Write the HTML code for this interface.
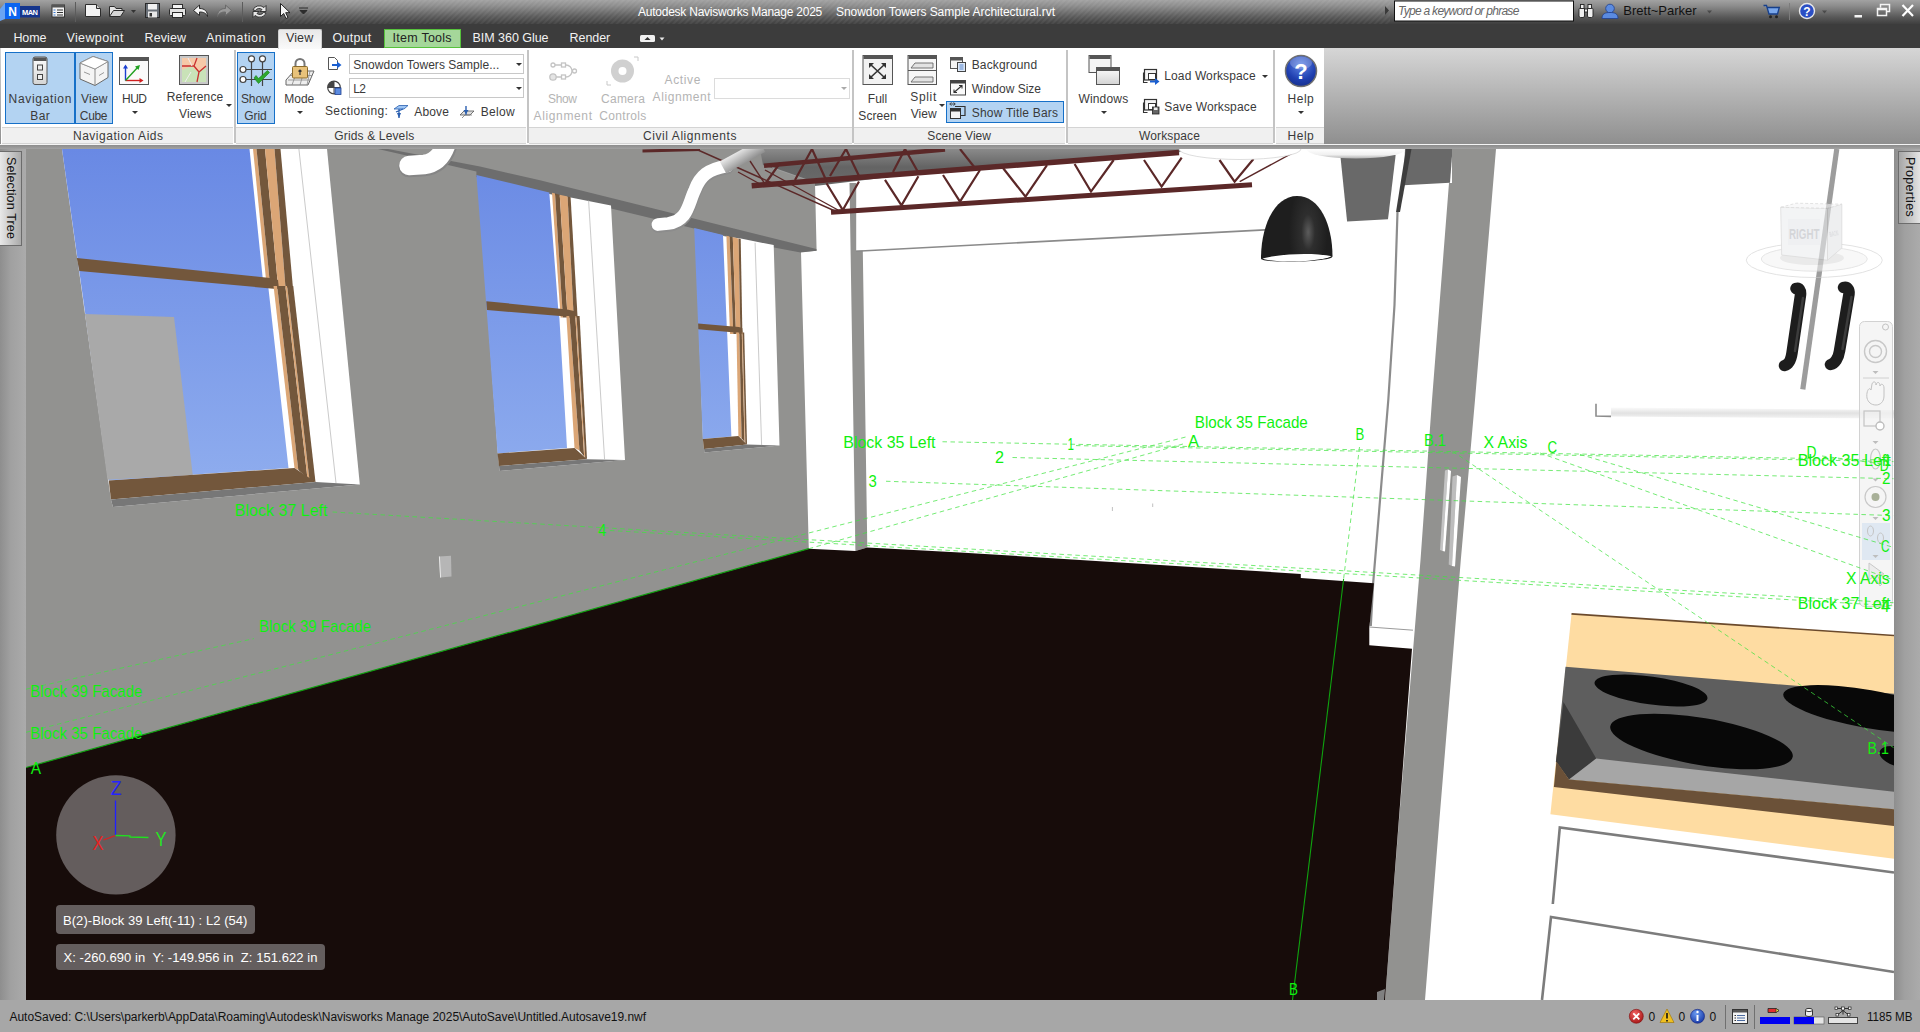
<!DOCTYPE html>
<html lang="en">
<head>
<meta charset="utf-8">
<title>Autodesk Navisworks Manage 2025 - Snowdon Towers Sample Architectural.rvt</title>
<style>
*{box-sizing:border-box;margin:0;padding:0}
html,body{width:1920px;height:1032px;overflow:hidden;background:#a7a7a7}
body{position:relative;font-family:"Liberation Sans",sans-serif;font-size:12px;color:#333}
.abs{position:absolute}
#titlebar{left:0;top:0;width:1920px;height:24px;background:linear-gradient(#a2a2a2 0%,#8c8c8c 25%,#5a5a5a 70%,#3f3f3f 100%)}
#tabbar{left:0;top:24px;width:1920px;height:24px;background:#3c3c3c}
#ribbon{left:0;top:48px;width:1920px;height:97px;background:linear-gradient(#d6d6d6,#8e8e8e)}
#ribbonwhite{left:1px;top:0;width:1322.800px;height:97px;background:#fff}
#gap{left:0;top:145px;width:1920px;height:4px;background:linear-gradient(#8c8c8c,#a2a2a2)}
#leftbar{left:0;top:149px;width:26px;height:851px;background:linear-gradient(90deg,#8e8e8e,#a0a0a0 40%,#ababab 100%)}
#rightbar{left:1894px;top:149px;width:26px;height:851px;background:linear-gradient(90deg,#8e8e8e,#a0a0a0 40%,#ababab 100%)}
#status{left:0;top:1000px;width:1920px;height:32px;background:#a7a7a7}
#scene{left:26px;top:149px;width:1868px;height:851px;background:#fff;overflow:hidden}
.t{position:absolute;white-space:nowrap;line-height:14px;height:14px}
.tab{position:absolute;top:31px;color:#f2f2f2;font-size:12.5px;white-space:nowrap;line-height:14px}
.rl{position:absolute;white-space:nowrap;font-size:12px;line-height:14px;color:#3a3a3a;text-align:center}
.dis{color:#b4b4b4}
.sel{position:absolute;background:#b3d3f2;border:1px solid #1670c8}
.ptitle{position:absolute;top:78.5px;height:17.5px;background:#f0f0f0;border-top:1px solid #d4d4d4;border-bottom:1px solid #d4d4d4}
.psep{position:absolute;top:2px;width:2px;height:93px;background:#c4c4c4}
.combo{position:absolute;border:1px solid #c8c8c8;background:#fff;height:20px}
.arr{position:absolute;width:0;height:0;border-left:3px solid transparent;border-right:3px solid transparent;border-top:3px solid #444}
.vtab{position:absolute;background:linear-gradient(90deg,#e8e8e8,#aaaaaa);border:1px solid #6c6c6c;color:#111;font-size:12.5px}
.hud{position:absolute;background:#645e5e;border-radius:4px;color:#fff;font-size:13px;line-height:16px;white-space:nowrap}
</style>
</head>
<body>
<div id="titlebar" class="abs"></div>
<div id="tabbar" class="abs"></div>
<div id="ribbon" class="abs"><div id="ribbonwhite" class="abs"></div></div>
<div id="gap" class="abs"></div><div class="abs" style="left:0;top:143.800px;width:1920px;height:1.700px;background:#f4f4f4"></div>
<div id="leftbar" class="abs"></div>
<div id="rightbar" class="abs"></div>
<div id="scene" class="abs">
<svg width="1868" height="851" viewBox="26 149 1868 851" style="position:absolute;left:0;top:0" font-family="'Liberation Sans',sans-serif">
<defs>
<linearGradient id="sky" gradientUnits="userSpaceOnUse" x1="0" y1="149" x2="0" y2="480"><stop offset="0" stop-color="#6989e4"/><stop offset="1" stop-color="#8eacee"/></linearGradient>
<linearGradient id="slab" gradientUnits="userSpaceOnUse" x1="0" y1="149" x2="0" y2="185"><stop offset="0" stop-color="#8a8a8a"/><stop offset="0.5" stop-color="#646464"/><stop offset="1" stop-color="#6a6a6a"/></linearGradient>
<radialGradient id="lamp" cx="0.66" cy="0.55" r="0.6" gradientTransform="translate(0.66 0.55) scale(0.45 1.3) translate(-0.66 -0.55)"><stop offset="0" stop-color="#5c5c5c"/><stop offset="0.35" stop-color="#2e2e2e"/><stop offset="1" stop-color="#1e1e1e"/></radialGradient>
<linearGradient id="pipeg" gradientUnits="userSpaceOnUse" x1="738" y1="150" x2="748" y2="166"><stop offset="0" stop-color="#ececec"/><stop offset="0.5" stop-color="#b4b4b4"/><stop offset="1" stop-color="#7c7c7c"/></linearGradient>
<linearGradient id="dish" x1="0" y1="0" x2="0" y2="1"><stop offset="0.5" stop-color="#ffffff"/><stop offset="0.8" stop-color="#f0f0f0"/><stop offset="1" stop-color="#b0b0b0"/></linearGradient><linearGradient id="rail" x1="0" y1="0" x2="0" y2="1"><stop offset="0" stop-color="#fafafa"/><stop offset="0.5" stop-color="#e2e2e2"/><stop offset="1" stop-color="#f4f4f4"/></linearGradient>
</defs>
<rect x="26" y="149" width="1868" height="851" fill="#fff"/>
<!-- ceiling slab + truss -->
<g id="ceiling">
<polygon points="745,149 1185,149 1179,152.6 940,171 815,186 763,168 745,158" fill="url(#slab)"/>
<polygon points="772,167 816,182.5 800,182 776,175" fill="#9d9d9d"/>
</g>
<!-- left wall with beam -->
<g id="wall">
<polygon points="26,149 760,149 763,165 815,183 816.6,250.7 801,251.9 808.8,548.7 26,767.5" fill="#929290"/>
<polygon points="388,149 480,166.500 540,180.300 816.400,249 816.600,250.700 800.600,252.600 774,247.500 694,228.500 611,208.500 476.400,177 476.400,171.400 378,149" fill="#6d6d6d"/>
</g>
<g id="win1">
<polygon points="62,149 327,149 359.8,484.4 113,507 110.9,499.5" fill="#fff"/>
<polygon points="62,149 249.5,149 263,281 268.3,287 288.5,468 108.8,480.6" fill="url(#sky)"/>
<polygon points="85,314 174,317 192.7,474.8 107.5,479.8" fill="#a9a9a9"/>
<polygon points="253,149 256.5,149 270.31,287.5 266.81,287.5" fill="#dba676"/>
<polygon points="256.5,149 265,149 278.19,287.5 270.31,287.5" fill="#73573c"/>
<polygon points="265,149 274.5,149 285.489,287.5 278.19,287.5" fill="#dba676"/>
<polygon points="274.5,149 280.5,149 292.947,287.5 285.489,287.5" fill="#73573c"/>
<polygon points="76.8,257.9 270.1,278 278,280 279,289.2 79.4,271" fill="#73573c"/>
<polygon points="273.54,286 277.14,286 298.3,470 294.47,468" fill="#dba676"/>
<polygon points="277.14,286 285.34,286 307.42,478 298.3,470" fill="#73573c"/>
<polygon points="285.34,286 287.14,286 309.393,479.5 307.42,478" fill="#dba676"/>
<polygon points="287.14,286 293.246,286 315.492,482 309.393,479.5" fill="#73573c"/>
<polygon points="108.8,480.6 294.47,468 315.492,482 110.9,499.5" fill="#73573c"/>
<polygon points="110.9,499.5 315.492,482 359.8,484.4 113,507" fill="#777"/>
<line x1="298.9" y1="149" x2="336" y2="483" stroke="#bdbdbd" stroke-width="0.8"/>
</g>
<g id="win2">
<polygon points="478,178 551.5,194.500 572,197.800 611,205.500 625,460 499.6,471 498,455" fill="#fff"/>
<polygon points="476.400,175 549.3,192.400 558.3,310 559.4,318 567,447.9 497.6,453.4" fill="url(#sky)"/>
<polygon points="552,192.821 555,193.54 562.9,317.5 560.6,317.5" fill="#dba676"/>
<polygon points="555,193.54 559.7,194.667 567.6,317.5 562.9,317.5" fill="#73573c"/>
<polygon points="559.7,194.667 567.6,196.561 573.7,317.5 567.6,317.5" fill="#dba676"/>
<polygon points="567.6,196.561 570.6,197.28 577.6,317.5 573.7,317.5" fill="#73573c"/>
<polygon points="486.3,301.2 567.2,309.4 574,311 575,319.5 566.4,316.5 487,310" fill="#73573c"/>
<polygon points="566.4,316 569.5,316 579.5,450.5 574.5,447.9" fill="#dba676"/>
<polygon points="569.5,316 575.3,316 584.2,456.5 579.5,450.5" fill="#73573c"/>
<polygon points="575.3,316 576.5,316 585.2,457.5 584.2,456.5" fill="#dba676"/>
<polygon points="576.5,316 579.6,316 587,459.2 585.2,457.5" fill="#73573c"/>
<polygon points="497.6,453.4 574.5,447.9 587,459.2 499,466" fill="#73573c"/>
<polygon points="499,466 587,459.2 625,460 499.6,471" fill="#777"/>
<line x1="588.6" y1="200.5" x2="604.6" y2="459.6" stroke="#bdbdbd" stroke-width="0.8"/>
</g>
<g id="win3">
<polygon points="695.5,230 725.4,236.500 740.800,238.600 773.7,245.1 779.5,445.6 704.4,452.6 703,440" fill="#fff"/>
<polygon points="694.2,228.1 723,235.1 726.7,325 727.2,334 731.4,436.5 702.8,439" fill="url(#sky)"/>
<polygon points="726.4,235.625 729.6,236.402 733.3,334 730,334" fill="#dba676"/>
<polygon points="729.6,236.402 732.8,237.18 736,334 733.3,334" fill="#73573c"/>
<polygon points="732.8,237.18 738.6,238.589 740.4,334 736,334" fill="#dba676"/>
<polygon points="738.6,238.589 740.7,239.099 742.4,334 740.4,334" fill="#73573c"/>
<polygon points="698.1,323.5 738.8,327 742.3,328 742.8,334.5 737.7,332.8 698.3,329.3" fill="#73573c"/>
<polygon points="736.5,332.5 739.3,332.5 741.6,438.2 738.4,436" fill="#dba676"/>
<polygon points="739.3,332.5 741.8,332.5 744.6,442 741.6,438.2" fill="#73573c"/>
<polygon points="741.8,332.5 742.6,332.5 745.4,443 744.6,442" fill="#dba676"/>
<polygon points="742.6,332.5 744.2,332.5 747,444.4 745.4,443" fill="#73573c"/>
<polygon points="702.8,439 738.4,436 747,444.4 704,449" fill="#73573c"/>
<polygon points="704,449 747,444.4 779.5,445.6 704.4,452.6" fill="#777"/>
<line x1="755.1" y1="242.8" x2="761.6" y2="445.1" stroke="#bdbdbd" stroke-width="0.8"/>
</g>
<polygon points="439,556.5 451,555.7 451.5,576.5 440.2,577.6" fill="#b6b6b6"/>
<line x1="439.4" y1="556.5" x2="440.6" y2="577.6" stroke="#e8e8e8" stroke-width="1"/>
<!--WINDOWS-->
<g id="columns">
<polygon points="849.5,183 856.2,183 856.2,250.7 862.8,250.4 867.3,547.6 855.4,551" fill="#929290"/>
<line x1="856" y1="251.2" x2="1265" y2="229.9" stroke="#8a8a8a" stroke-width="1.6"/>
</g>
<g id="truss" stroke="#5b2828" fill="none">
<line x1="642.5" y1="151" x2="700" y2="149.4" stroke-width="3"/>
<line x1="764" y1="165.8" x2="945" y2="149.5" stroke-width="4.5"/>
<line x1="751.7" y1="185.8" x2="1179" y2="152.6" stroke-width="5.5"/>
<line x1="831" y1="212.3" x2="1252" y2="184.8" stroke-width="5"/>
<g stroke-width="1.4">
<line x1="698" y1="150" x2="835" y2="211"/>
<line x1="738" y1="172" x2="760" y2="184"/>
<line x1="750" y1="161" x2="765" y2="184"/>
<line x1="765" y1="170" x2="838" y2="210"/>
</g>
<g stroke-width="2.2">
<path d="M826.5,183.3 L842.8,210 L859,181.5"/>
<path d="M885,179.8 L901.5,205.3 L918.4,176.3"/>
<path d="M943,175 L960,201.7 L980,170"/>
<path d="M1002.8,167.7 L1025.5,196.7 L1047,165.2"/>
<path d="M1074.6,164 L1091,191.6 L1113.7,160"/>
<path d="M1144,160 L1161.6,186.6 L1181.7,157.6"/>
<path d="M1219.5,160 L1234.6,181.6 L1253.5,159"/>
<path d="M780,163 L765,184 M812,149 L795,180 M812,149 L826,180 M846,149 L830,176 M846,149 L860,178 M905,149 L893,172 M905,149 L918,172 M960,149 L975,168"/>
</g>
<line x1="1239.7" y1="181.6" x2="1300" y2="149" stroke-width="1.4"/>
</g>
<g id="lights">
<ellipse cx="1240" cy="149" rx="61" ry="10.5" fill="#fff" stroke="#c8c8c8" stroke-width="0.6"/>
</g>
<g id="pipes" fill="none" stroke-linecap="round">
<path d="M409,166.800 L424,165.800 Q441,164 447,145" stroke="#858585" stroke-width="21"/>
<path d="M409,165.500 L424,164.500 Q440,162.500 446,144" stroke="#fff" stroke-width="19.500"/>
<path d="M658,225.800 L668,224.800 C688,222.300 688,205.300 694.800,191.300 C700,177.300 708,170.300 727,167.300" stroke="#8c8c8c" stroke-width="14"/>
<path d="M658,224.500 L668,223.500 C688,221 688,204 694.800,190 C700,176 708,169 727,166" stroke="#fff" stroke-width="12.800"/>
<path d="M762,146 L723,167.500" stroke="url(#pipeg)" stroke-width="13.500" stroke-linecap="butt"/>
</g>
<g id="lamp">
<path d="M1261,258.5 C1261,225 1275,196 1297,196 C1320,196 1332.5,225 1332.5,256.5 C1332.5,262 1261,264 1261,258.5Z" fill="url(#lamp)"/>
<path d="M1262.5,258.5 C1280,253.5 1315,252.5 1331.5,256.3 C1320,262 1275,263.5 1262.5,258.5Z" fill="#fff"/>
</g>
<g id="hang">
<polygon points="1340.200,154 1396,152 1388,219.200 1347.100,221.400" fill="#696969"/>
<ellipse cx="1356" cy="149" rx="49.500" ry="9.500" fill="url(#dish)"/>
<polygon points="1405,149 1452.500,149 1450,182.700 1403.500,185.200" fill="#696969"/>
<polygon points="1406,149 1411.500,149 1400,212 1396,212" fill="#3e3e3e"/>
<polyline points="1397.5,212 1394.500,305 1388.300,400 1373.2,582.7 1370.8,626" fill="none" stroke="#8c8c8c" stroke-width="2.2"/>
</g>
<g id="jamb">
<polygon points="1452,149 1496,149 1475,400 1460.8,560 1439.4,820 1425,1000 1385,1000 1399,820 1420.5,560 1432,400 1449,183 1452,183" fill="#929290"/>
<polygon points="1445,470.5 1448,469.5 1442.5,551 1440,550" fill="#c4c4c4"/>
<polygon points="1448,469.5 1451,471 1445,551.5 1442.5,551" fill="#fff"/>
<polygon points="1452.5,476.5 1457,475 1452,566 1448.7,564.5" fill="#bdbdbd"/>
<polygon points="1457,475 1461,477 1455,566.5 1452,566" fill="#fff"/>
</g>
<!--COLUMNS-->
<g id="floor">
<polygon points="26,767.5 808.8,548.7 855.4,551 867.3,547.6 960,552.4 1200,567.6 1300.8,573.9 1300.8,578 1373.9,583.2 1369.3,628 1369.3,645.2 1412,648.7 1385,1000 26,1000" fill="#170c0a"/>
<line x1="1369.3" y1="627" x2="1413" y2="630.2" stroke="#9a9a9a" stroke-width="1"/>
<polygon points="1377,992 1385,989 1384,1000 1377,1000" fill="#808080"/>
</g>
<!--FLOOR-->
<g id="rightside">
<line x1="1836.8" y1="149" x2="1802.8" y2="389.4" stroke="#9c9c9c" stroke-width="5.2"/>
<!-- rail -->
<polygon points="1611,407.6 1894,410 1894,418.6 1611,416.4" fill="url(#rail)"/>
<path d="M1596,403.8 L1596,416 L1611,416.4" fill="none" stroke="#8c8c8c" stroke-width="1.6"/>
<!-- handles -->
<g fill="none" stroke="#1d1d1d" stroke-width="11.5" stroke-linecap="round" stroke-linejoin="round">
<path d="M1796,288.500 C1799,287.500 1801,290 1800.500,295 L1792,353 C1791,360 1788.500,364.500 1784.500,365.500"/>
<path d="M1843.500,287.500 C1847,286.500 1849.500,289 1849,294 L1839.500,351 C1838.500,358 1835,363.500 1830.500,364.500"/>
</g>
<g fill="none" stroke="#3c3c3c" stroke-width="2.5" stroke-linecap="round"><path d="M1803,298 L1795,351"/><path d="M1851.500,297 L1842.500,349"/></g>
<!-- counter -->
<polygon points="1571.5,613.9 1894,635.5 1894,858.8 1550.4,814.2" fill="#fedca2"/>
<line x1="1571.5" y1="613.9" x2="1894" y2="635.5" stroke="#6b4a2c" stroke-width="1.6"/>
<polygon points="1565.5,666.8 1894,693.8 1894,809 1569,779.4 1556,761.3" fill="#5e5e5e"/>
<polygon points="1563.5,702 1596.2,758.6 1569,779.4 1556,761.3" fill="#3b3b3b"/>
<polygon points="1596.2,758.6 1894,791.8 1894,809.2 1569,779.4" fill="#a6a6a6"/>
<polygon points="1556.4,761.3 1569,779.4 1894,809.2 1894,826 1553.9,787" fill="#6b5138"/>
<g fill="#080808">
<ellipse cx="1651" cy="690.5" rx="57" ry="14" transform="rotate(8 1651 690.5)"/>
<ellipse cx="1701.5" cy="741.5" rx="92.5" ry="23.5" transform="rotate(9.5 1701.5 741.5)"/>
<ellipse cx="1868" cy="709" rx="86" ry="19" transform="rotate(10 1868 709)"/>
<ellipse cx="1900" cy="757" rx="21" ry="10" transform="rotate(15 1900 757)"/>
</g>
<!-- cabinet -->
<g fill="none" stroke="#7c7c7c" stroke-width="2.6">
<polyline points="1552.8,904 1559.8,827.5 1894,872.5"/>
<polyline points="1542,1000 1551,917 1894,972"/>
</g>
</g>
<g id="viewcube" opacity="0.6">
<ellipse cx="1814.300" cy="260.200" rx="68" ry="17.300" fill="none" stroke="#cfcfcf" stroke-width="1"/>
<ellipse cx="1814.300" cy="259" rx="53" ry="12.200" fill="#f4f4f4" stroke="#d4d4d4" stroke-width="1"/>
<ellipse cx="1812" cy="258" rx="32" ry="7" fill="#dcdcdc"/>
<polygon points="1780.700,207.300 1827.500,208.300 1827.500,260.200 1781.700,255" fill="#ecedef" stroke="#c4c4c4" stroke-width="0.800"/>
<polygon points="1827.500,208.300 1841.800,204.200 1841.800,248 1827.500,260.200" fill="#e3e4e6" stroke="#c4c4c4" stroke-width="0.800"/>
<polygon points="1780.700,207.300 1796,203.200 1841.800,204.200 1827.500,208.300" fill="#f4f4f5" stroke="#c4c4c4" stroke-width="0.800" stroke-dasharray="3 2"/>
<rect x="1788" y="219" width="32" height="26" fill="#e4e6ea"/>
<text x="1789" y="239" font-size="14" font-weight="bold" fill="#b8babf" textLength="30.500" lengthAdjust="spacingAndGlyphs">RIGHT</text>
<text x="1830" y="237" font-size="8" font-weight="bold" fill="#c4c6ca" textLength="9" lengthAdjust="spacingAndGlyphs" transform="rotate(-12 1830 237)">BACK</text>
</g>
<g id="navbar">
<rect x="1859.5" y="321.5" width="33" height="285" rx="5" fill="#f2f2f2" fill-opacity="0.75" stroke="#d2d2d2" stroke-width="1"/>
<circle cx="1885.5" cy="327" r="3" fill="none" stroke="#c2c2c2" stroke-width="1"/>
<circle cx="1875.5" cy="351.5" r="11" fill="none" stroke="#c8c8c8" stroke-width="1.4"/>
<circle cx="1875.5" cy="351.5" r="6" fill="none" stroke="#c8c8c8" stroke-width="1.4"/>
<line x1="1863" y1="378" x2="1889" y2="378" stroke="#d0d0d0"/>
<rect x="1864" y="411" width="16" height="15" fill="none" stroke="#c4c4c4" stroke-width="1.2"/>
<circle cx="1880" cy="426" r="4" fill="#fff" stroke="#bdbdbd" stroke-width="1.4"/>
<ellipse cx="1875.5" cy="459" rx="5" ry="10" fill="none" stroke="#c8c8c8" stroke-width="1.2"/>
<circle cx="1875.5" cy="497" r="10.5" fill="none" stroke="#c8c8c8" stroke-width="1.2"/>
<circle cx="1875.5" cy="497" r="4" fill="#a8b098"/>
<rect x="1862" y="523" width="28" height="37" fill="#dfe8f2"/>
<ellipse cx="1870.5" cy="531" rx="3" ry="5" fill="none" stroke="#c4c4c4"/>
<ellipse cx="1880.5" cy="538" rx="3" ry="5" fill="none" stroke="#c4c4c4"/>
<path d="M1869,563 L1869,580 L1874,576 L1880,586 L1882,584 L1877,575 L1884,574Z" fill="#ececec" stroke="#c8c8c8"/>
<g fill="#bdbdbd"><path d="M1872.5,371 l6,0 l-3,3z"/><path d="M1872.5,441 l6,0 l-3,3z"/><path d="M1872.5,478.5 l6,0 l-3,3z"/><path d="M1872.5,517 l6,0 l-3,3z"/><path d="M1872.5,555 l6,0 l-3,3z"/></g>
<path d="M1867,398 C1866,392 1869,386 1871,390 L1872,384 C1873,381 1876,381 1876,385 C1877,381 1880,382 1880,386 C1881,383 1884,384 1884,388 L1884,396 C1884,402 1880,405 1876,405 C1871,405 1868,402 1867,398Z" fill="#f6f6f6" stroke="#c2c2c2" stroke-width="1"/>
</g>
<!--RIGHT-->
<g id="grid">
<g stroke="#3fe43f" stroke-width="0.9" stroke-dasharray="4.5 3.5" fill="none" opacity="0.8">
<line x1="942.5" y1="441.75" x2="1893.5" y2="460.1"/>
<line x1="1076" y1="445.6" x2="1893.5" y2="461.6"/>
<line x1="1012.5" y1="457.5" x2="1893.5" y2="478.7"/>
<line x1="886" y1="481.25" x2="1893.5" y2="515.6"/>
<line x1="332.6" y1="512" x2="1893.5" y2="602.7"/>
<line x1="610" y1="530.5" x2="1893.5" y2="605.8"/>
<line x1="26" y1="689.2" x2="254" y2="638.6"/>
<line x1="26" y1="732.300" x2="1188.75" y2="436.25"/>
<line x1="808.8" y1="548.7" x2="1183" y2="444"/>
<line x1="1359.5" y1="447" x2="1343.6" y2="579"/>
<line x1="1452.5" y1="451.25" x2="1893.5" y2="747.6"/>
<line x1="1540" y1="453" x2="1893.5" y2="580"/>
<line x1="1580" y1="454.4" x2="1893.5" y2="547.4"/>
<line x1="1822" y1="456" x2="1893.5" y2="465.5"/>
</g>
<line x1="26" y1="767.5" x2="808.8" y2="548.7" stroke="#0f9f0f" stroke-width="1.200"/>
<line x1="1343.6" y1="579" x2="1292.5" y2="1000" stroke="#0fa30f" stroke-width="1.1"/>
<g fill="#10f010" font-size="16.6">
<text x="234.8" y="516" textLength="92.7" lengthAdjust="spacingAndGlyphs">Block 37 Left</text>
<text x="259" y="632.3" textLength="112" lengthAdjust="spacingAndGlyphs">Block 39 Facade</text>
<text x="30.2" y="697" textLength="112.2" lengthAdjust="spacingAndGlyphs">Block 39 Facade</text>
<text x="30.2" y="738.6" textLength="112.2" lengthAdjust="spacingAndGlyphs">Block 35 Facade</text>
<text x="30.7" y="773.9" textLength="10.3" lengthAdjust="spacingAndGlyphs">A</text>
<text x="598" y="536" textLength="8.3" lengthAdjust="spacingAndGlyphs">4</text>
<text x="843.3" y="447.9" textLength="92.2" lengthAdjust="spacingAndGlyphs">Block 35 Left</text>
<text x="868.5" y="487" textLength="8.3" lengthAdjust="spacingAndGlyphs">3</text>
<text x="995" y="463" textLength="9" lengthAdjust="spacingAndGlyphs">2</text>
<text x="1067.5" y="450.4" textLength="6.5" lengthAdjust="spacingAndGlyphs">1</text>
<text x="1194.8" y="428.2" textLength="113" lengthAdjust="spacingAndGlyphs">Block 35 Facade</text>
<text x="1188" y="446.6" textLength="11" lengthAdjust="spacingAndGlyphs">A</text>
<text x="1355.6" y="440.3" textLength="8.8" lengthAdjust="spacingAndGlyphs">B</text>
<text x="1424" y="446" textLength="22" lengthAdjust="spacingAndGlyphs">B.1</text>
<text x="1483.5" y="447.9" textLength="44" lengthAdjust="spacingAndGlyphs">X Axis</text>
<text x="1547.6" y="452.6" textLength="9.6" lengthAdjust="spacingAndGlyphs">C</text>
<text x="1806.6" y="458" textLength="10" lengthAdjust="spacingAndGlyphs">D</text>
<text x="1797.8" y="466" textLength="93" lengthAdjust="spacingAndGlyphs">Block 35 Left</text>
<text x="1884.5" y="466" textLength="6" lengthAdjust="spacingAndGlyphs">1</text>
<text x="1879.7" y="471" textLength="9" lengthAdjust="spacingAndGlyphs">D</text>
<text x="1882" y="484.4" textLength="8.5" lengthAdjust="spacingAndGlyphs">2</text>
<text x="1882" y="521.4" textLength="8.5" lengthAdjust="spacingAndGlyphs">3</text>
<text x="1881" y="552.4" textLength="8.5" lengthAdjust="spacingAndGlyphs">C</text>
<text x="1846" y="584.4" textLength="43.7" lengthAdjust="spacingAndGlyphs">X Axis</text>
<text x="1797.8" y="609" textLength="92.7" lengthAdjust="spacingAndGlyphs">Block 37 Left</text>
<text x="1881" y="611.6" textLength="8.3" lengthAdjust="spacingAndGlyphs">4</text>
<text x="1867.6" y="753.7" textLength="21.4" lengthAdjust="spacingAndGlyphs">B.1</text>
<text x="1289" y="995" textLength="9" lengthAdjust="spacingAndGlyphs">B</text>
</g>
</g>
<path d="M1112.4,507 v4 M1152.7,503.500 v3.500" stroke="#b0b0b0" stroke-width="0.800"/>
<!--GRID-->
<g id="hudaxes">
<circle cx="115.900" cy="834.900" r="59.700" fill="#645d5d"/>
<g fill="none" stroke-width="1.300">
<line x1="115.500" y1="800.500" x2="115.500" y2="835.500" stroke="#2020ff"/>
<line x1="115.500" y1="835.500" x2="103.500" y2="840" stroke="#e02020"/>
<path d="M115.500,835.500 L130,835.800 L130,837 L148.500,837.500" stroke="#20e020"/>
</g>
<g font-size="20.300">
<text x="110.700" y="794.800" fill="#2424ff" textLength="10.800" lengthAdjust="spacingAndGlyphs">Z</text>
<text x="92.500" y="850" fill="#e42424" textLength="11" lengthAdjust="spacingAndGlyphs">X</text>
<text x="155.500" y="845.700" fill="#24e424" textLength="11" lengthAdjust="spacingAndGlyphs">Y</text>
</g>
</g>

<!--HUD-->
</svg>

</div>
<div id="status" class="abs"></div>

<!-- title bar content -->
<div class="abs" style="left:0;top:0;width:1920px;height:24px;overflow:hidden">
<svg width="1920" height="24" style="position:absolute;left:0;top:0">
<defs><pattern id="hatch" width="4" height="4" patternUnits="userSpaceOnUse" patternTransform="rotate(45)"><rect width="2" height="4" fill="#fff" fill-opacity="0.05"/></pattern></defs>
<rect x="280" y="0" width="1110" height="24" fill="url(#hatch)"/>
<!-- N logo -->
<polygon points="0,9 5,3 5,19 0,21" fill="#6aa4f2"/>
<rect x="5" y="3" width="15" height="16" fill="#0b64f0"/>
<rect x="20" y="6" width="20" height="11.5" fill="#15358c"/>
<text x="12.5" y="16" font-size="12" font-weight="bold" fill="#fff" text-anchor="middle" font-family="'Liberation Sans',sans-serif">N</text>
<text x="30" y="15" font-size="7.5" font-weight="bold" fill="#fff" text-anchor="middle" font-family="'Liberation Sans',sans-serif" textLength="16">MAN</text>
<!-- list icon -->
<rect x="52" y="5" width="12.5" height="12" fill="#f4f4f4" stroke="#333" stroke-width="1"/><rect x="52" y="5" width="12.5" height="2.5" fill="#555"/><path d="M57,10h6M57,12.5h6M57,15h6" stroke="#333" stroke-width="1"/><path d="M53.5,10h2M53.5,12.5h2M53.5,15h2" stroke="#3a7ad0" stroke-width="1"/>
<line x1="75.500" y1="2" x2="75.500" y2="22" stroke="#5c5c5c"/>
<!-- new -->
<path d="M85.500,4.500 h11 l4,4 v8 h-15z" fill="#f2f2f2" stroke="#2c2c2c"/><path d="M96.500,4.500 v4 h4" fill="#cfcfcf" stroke="#2c2c2c"/>
<!-- open -->
<path d="M109.500,16.500 v-10 h5 l1.500,2 h6 v2" fill="#e6e6e6" stroke="#2c2c2c"/><path d="M109.500,16.500 l4,-6 h11 l-4,6z" fill="#d6d6d6" stroke="#2c2c2c"/>
<path d="M131,10 h5 l-2.500,3z" fill="#333"/>
<!-- save -->
<rect x="145.500" y="3.500" width="14" height="14" fill="#6a7078" stroke="#2a2a2a"/><rect x="148" y="4" width="9" height="5.500" fill="#f2f2f2"/><rect x="148" y="11.500" width="9" height="6" fill="#e8e8e8"/><rect x="149.500" y="13" width="2.500" height="3.500" fill="#333"/>
<!-- print -->
<rect x="172.500" y="4.500" width="10" height="5" fill="#f4f4f4" stroke="#2c2c2c"/><rect x="169.500" y="8.500" width="16" height="7" rx="1" fill="#e2e2e2" stroke="#2c2c2c"/><rect x="172.500" y="12.500" width="10" height="5" fill="#f4f4f4" stroke="#2c2c2c"/>
<!-- undo / redo -->
<path d="M193.500,10.500 l6,-5.500 v3.500 c5,0 8,2.500 8,8 c-1.500,-3.500 -4,-4.500 -8,-4.500 v3.500z" fill="#f4f4f4" stroke="#2a2a2a" stroke-width="1"/>
<path d="M231.500,10.500 l-6,-5.500 v3.500 c-5,0 -8,2.500 -8,8 c1.500,-3.500 4,-4.500 8,-4.500 v3.500z" fill="#9a9a9a" stroke="#6a6a6a" stroke-width="1"/>
<line x1="242.500" y1="2" x2="242.500" y2="22" stroke="#5c5c5c"/>
<!-- refresh -->
<path d="M253,10 a6.500,5.500 0 0 1 11,-2.500 l2,-2 v6 h-6 l2,-2 a4,3.500 0 0 0 -6.500,1z M266,13 a6.500,5.500 0 0 1 -11,2.500 l-2,2 v-6 h6 l-2,2 a4,3.500 0 0 0 6.500,-1z" fill="#e8e8e8" stroke="#2a2a2a" stroke-width="0.9"/>
<!-- cursor -->
<path d="M280.500,3.500 v13 l3.200,-3 l2.300,5 l2,-1 l-2.300,-4.800 h4.300z" fill="#f4f4f4" stroke="#222" stroke-width="1"/>
<path d="M299,8 h9 M300,10.500 h7 l-3.500,3.500z" stroke="#2c2c2c" fill="#2c2c2c" stroke-width="1"/>
<!-- search area -->
<path d="M1385,6 l4,4.500 l-4,4.500z" fill="#3a3a3a"/>
<rect x="1394.500" y="1" width="179" height="20" fill="#fff" stroke="#111" stroke-width="1"/>
<!-- binoculars -->
<g fill="#f0f0f0" stroke="#222" stroke-width="0.9"><rect x="1579" y="8" width="5.500" height="9.500" rx="1.500"/><rect x="1587.500" y="8" width="5.500" height="9.500" rx="1.500"/><rect x="1580.500" y="4.500" width="3.500" height="4"/><rect x="1588" y="4.500" width="3.500" height="4"/><rect x="1584.500" y="9" width="3" height="3"/></g>
<!-- user -->
<circle cx="1610" cy="8.500" r="4.300" fill="#5b8be0" stroke="#1e3f90" stroke-width="0.8"/><path d="M1602,18.500 c0,-5 3.500,-6 8,-6 c4.500,0 8,1 8,6z" fill="#5b8be0" stroke="#1e3f90" stroke-width="0.8"/>
<path d="M1707,10.500 h5 l-2.500,3z" fill="#4a4a4a"/>
<!-- cart -->
<path d="M1763.500,5.500 h3 l2.500,8.500 h8.500 l1.800,-6.500 h-11.800" fill="#7aa7ea" stroke="#173f8a" stroke-width="1.300"/><circle cx="1770.500" cy="16.800" r="1.500" fill="#222"/><circle cx="1776.500" cy="16.800" r="1.500" fill="#222"/>
<line x1="1789.500" y1="3" x2="1789.500" y2="20" stroke="#7c7c7c"/>
<circle cx="1807" cy="11" r="7.500" fill="#2b4fc4" stroke="#e8e8e8" stroke-width="1.400"/>
<text x="1807" y="15.500" font-size="12" font-weight="bold" fill="#fff" text-anchor="middle" font-family="'Liberation Sans',sans-serif">?</text>
<path d="M1822,10.500 h5 l-2.500,3z" fill="#4a4a4a"/>
<rect x="1854.500" y="15" width="7.500" height="2.500" fill="#f4f4f4"/>
<path d="M1880.500,7.500 v-3 h9 v7 h-3 M1877.500,8.500 h9 v7 h-9z M1877.500,9.500h9" fill="none" stroke="#f4f4f4" stroke-width="1.500"/>
<path d="M1902.500,5 l10.500,11 M1913,5 l-10.500,11" stroke="#fff" stroke-width="2.200"/>
</svg>
<div class="t" style="left:638px;top:5px;color:#fff;font-size:12px"><span class="fit" style="letter-spacing:-0.24px;margin-right:0.24px">Autodesk Navisworks Manage 2025</span></div><div class="t" style="left:836px;top:5px;color:#fff;font-size:12px"><span class="fit" style="letter-spacing:-0.057px;margin-right:0.057px">Snowdon Towers Sample Architectural.rvt</span></div>
<div class="t" style="left:1398px;top:4px;color:#666;font-size:12px;font-style:italic"><span class="fit" style="letter-spacing:-0.718px;margin-right:0.718px">Type a keyword or phrase</span></div>
<div class="t" style="left:1623.300px;top:4px;color:#111;font-size:13px"><span class="fit" style="letter-spacing:0.005px;margin-right:-0.005px">Brett~Parker</span></div>
</div>
<!-- tabs -->
<div class="abs" style="left:277.500px;top:28.500px;width:44px;height:20px;background:linear-gradient(#e8e8e8,#fafafa);border:1px solid #d0d0d0;border-bottom:none;border-radius:2px 2px 0 0"></div>
<div class="abs" style="left:383.500px;top:28.500px;width:77.500px;height:19.500px;background:#a5d79a;border:1px solid #56c23c"></div>
<div class="tab" style="left:13.500px"><span class="fit" style="letter-spacing:-0.161px;margin-right:0.161px">Home</span></div>
<div class="tab" style="left:66.500px"><span class="fit" style="letter-spacing:0.368px;margin-right:-0.368px">Viewpoint</span></div>
<div class="tab" style="left:144.500px"><span class="fit" style="letter-spacing:0.117px;margin-right:-0.117px">Review</span></div>
<div class="tab" style="left:206px"><span class="fit" style="letter-spacing:0.49px;margin-right:-0.49px">Animation</span></div>
<div class="tab" style="left:286px;color:#333"><span class="fit" style="letter-spacing:0.106px;margin-right:-0.106px">View</span></div>
<div class="tab" style="left:332.500px"><span class="fit" style="letter-spacing:0.245px;margin-right:-0.245px">Output</span></div>
<div class="tab" style="left:392.500px;color:#222"><span class="fit" style="letter-spacing:0.265px;margin-right:-0.265px">Item Tools</span></div>
<div class="tab" style="left:472.500px"><span class="fit" style="letter-spacing:-0.036px;margin-right:0.036px">BIM 360 Glue</span></div>
<div class="tab" style="left:569.500px"><span class="fit" style="letter-spacing:-0.05px;margin-right:0.05px">Render</span></div>
<svg class="abs" style="left:636px;top:30px" width="34" height="16"><rect x="4" y="5" width="15" height="7" rx="1.500" fill="#f0f0f0"/><path d="M8.500,10 l3,-3 l3,3z" fill="#333"/><path d="M23.500,7.500 h5 l-2.500,3z" fill="#e8e8e8"/></svg>
<div id="rib" class="abs" style="left:0;top:0;width:1920px;height:150px;pointer-events:none">
<div class="sel" style="left:5px;top:52px;width:70px;height:72px"></div>
<div class="sel" style="left:73.500px;top:52px;width:39.500px;height:72px;border-left-width:2px"></div>
<div class="sel" style="left:237px;top:52px;width:37.600px;height:72px"></div>
<div class="sel" style="left:946px;top:101px;width:117.500px;height:21.500px"></div>
<div class="ptitle" style="left:2px;top:126.500px;width:231px"></div>
<div class="ptitle" style="left:236px;top:126.500px;width:290px"></div>
<div class="ptitle" style="left:529px;top:126.500px;width:322.5px"></div>
<div class="ptitle" style="left:854px;top:126.500px;width:211px"></div>
<div class="ptitle" style="left:1068px;top:126.500px;width:204.5px"></div>
<div class="ptitle" style="left:1275.5px;top:126.500px;width:48px"></div>
<div class="psep" style="left:233.5px;top:50px"></div>
<div class="psep" style="left:526.5px;top:50px"></div>
<div class="psep" style="left:851.5px;top:50px"></div>
<div class="psep" style="left:1065.5px;top:50px"></div>
<div class="psep" style="left:1273px;top:50px"></div>

<div class="rl " style="left:40px;top:91.5px;width:200px;margin-left:-100px"><span class="fit" style="letter-spacing:0.68px;margin-right:-0.68px">Navigation</span></div>
<div class="rl " style="left:40px;top:108.5px;width:200px;margin-left:-100px"><span class="fit" style="letter-spacing:0.438px;margin-right:-0.438px">Bar</span></div>
<div class="rl " style="left:94.3px;top:91.5px;width:200px;margin-left:-100px"><span class="fit" style="letter-spacing:0.226px;margin-right:-0.226px">View</span></div>
<div class="rl " style="left:93.7px;top:108.5px;width:200px;margin-left:-100px"><span class="fit" style="letter-spacing:-0.347px;margin-right:0.347px">Cube</span></div>
<div class="rl " style="left:134.5px;top:91.5px;width:200px;margin-left:-100px"><span class="fit" style="letter-spacing:-0.533px;margin-right:0.533px">HUD</span></div>
<div class="rl " style="left:195px;top:89.5px;width:200px;margin-left:-100px"><span class="fit" style="letter-spacing:0.136px;margin-right:-0.136px">Reference</span></div>
<div class="rl " style="left:195.3px;top:106.5px;width:200px;margin-left:-100px"><span class="fit" style="letter-spacing:0.181px;margin-right:-0.181px">Views</span></div>
<div class="rl " style="left:255.8px;top:91.5px;width:200px;margin-left:-100px"><span class="fit" style="letter-spacing:-0.083px;margin-right:0.083px">Show</span></div>
<div class="rl " style="left:255.5px;top:108.5px;width:200px;margin-left:-100px"><span class="fit" style="letter-spacing:-0.093px;margin-right:0.093px">Grid</span></div>
<div class="rl " style="left:299.3px;top:91.5px;width:200px;margin-left:-100px"><span class="fit" style="letter-spacing:-0.008px;margin-right:0.008px">Mode</span></div>
<div class="rl " style="left:325px;top:104px;text-align:left"><span class="fit" style="letter-spacing:0.357px;margin-right:-0.357px">Sectioning:</span></div>
<div class="rl " style="left:414.3px;top:104.5px;text-align:left"><span class="fit" style="letter-spacing:0.134px;margin-right:-0.134px">Above</span></div>
<div class="rl " style="left:480.7px;top:104.5px;text-align:left"><span class="fit" style="letter-spacing:0.322px;margin-right:-0.322px">Below</span></div>
<div class="rl dis" style="left:562.5px;top:91.5px;width:200px;margin-left:-100px"><span class="fit" style="letter-spacing:-0.408px;margin-right:0.408px">Show</span></div>
<div class="rl dis" style="left:562.8px;top:108.5px;width:200px;margin-left:-100px"><span class="fit" style="letter-spacing:0.625px;margin-right:-0.625px">Alignment</span></div>
<div class="rl dis" style="left:623px;top:91.5px;width:200px;margin-left:-100px"><span class="fit" style="letter-spacing:0.219px;margin-right:-0.219px">Camera</span></div>
<div class="rl dis" style="left:622.8px;top:108.5px;width:200px;margin-left:-100px"><span class="fit" style="letter-spacing:0.352px;margin-right:-0.352px">Controls</span></div>
<div class="rl dis" style="left:682.5px;top:72.5px;width:200px;margin-left:-100px"><span class="fit" style="letter-spacing:0.619px;margin-right:-0.619px">Active</span></div>
<div class="rl dis" style="left:681.6px;top:89.7px;width:200px;margin-left:-100px"><span class="fit" style="letter-spacing:0.592px;margin-right:-0.592px">Alignment</span></div>
<div class="rl " style="left:877.5px;top:91.5px;width:200px;margin-left:-100px"><span class="fit" style="letter-spacing:0.064px;margin-right:-0.064px">Full</span></div>
<div class="rl " style="left:877.5px;top:108.5px;width:200px;margin-left:-100px"><span class="fit" style="letter-spacing:0.061px;margin-right:-0.061px">Screen</span></div>
<div class="rl " style="left:923.3px;top:89.5px;width:200px;margin-left:-100px"><span class="fit" style="letter-spacing:0.671px;margin-right:-0.671px">Split</span></div>
<div class="rl " style="left:923.7px;top:106.5px;width:200px;margin-left:-100px"><span class="fit" style="letter-spacing:0.051px;margin-right:-0.051px">View</span></div>
<div class="rl " style="left:971.7px;top:57.5px;text-align:left"><span class="fit" style="letter-spacing:0.155px;margin-right:-0.155px">Background</span></div>
<div class="rl " style="left:971.7px;top:81.7px;text-align:left"><span class="fit" style="letter-spacing:-0.005px;margin-right:0.005px">Window Size</span></div>
<div class="rl " style="left:971.7px;top:105.7px;text-align:left"><span class="fit" style="letter-spacing:0.215px;margin-right:-0.215px">Show Title Bars</span></div>
<div class="rl " style="left:1103.3px;top:91.5px;width:200px;margin-left:-100px"><span class="fit" style="letter-spacing:0.188px;margin-right:-0.188px">Windows</span></div>
<div class="rl " style="left:1164.3px;top:69px;text-align:left"><span class="fit" style="letter-spacing:0.111px;margin-right:-0.111px">Load Workspace</span></div>
<div class="rl " style="left:1164.3px;top:100px;text-align:left"><span class="fit" style="letter-spacing:0.136px;margin-right:-0.136px">Save Workspace</span></div>
<div class="rl " style="left:1300.7px;top:91.5px;width:200px;margin-left:-100px"><span class="fit" style="letter-spacing:0.503px;margin-right:-0.503px">Help</span></div>
<div class="rl " style="left:118px;top:129px;width:200px;margin-left:-100px"><span class="fit" style="letter-spacing:0.525px;margin-right:-0.525px">Navigation Aids</span></div>
<div class="rl " style="left:374.3px;top:129px;width:200px;margin-left:-100px"><span class="fit" style="letter-spacing:0.141px;margin-right:-0.141px">Grids &amp; Levels</span></div>
<div class="rl " style="left:689.7px;top:129px;width:200px;margin-left:-100px"><span class="fit" style="letter-spacing:0.581px;margin-right:-0.581px">Civil Alignments</span></div>
<div class="rl " style="left:959.2px;top:129px;width:200px;margin-left:-100px"><span class="fit" style="letter-spacing:0.054px;margin-right:-0.054px">Scene View</span></div>
<div class="rl " style="left:1169.5px;top:129px;width:200px;margin-left:-100px"><span class="fit" style="letter-spacing:0.132px;margin-right:-0.132px">Workspace</span></div>
<div class="rl " style="left:1300.7px;top:129px;width:200px;margin-left:-100px"><span class="fit" style="letter-spacing:0.503px;margin-right:-0.503px">Help</span></div>
<div class="combo" style="left:349.300px;top:54.300px;width:175px"></div><div class="combo" style="left:349.300px;top:78.300px;width:175px"></div>
<div class="combo" style="left:714px;top:77.500px;width:135.500px;height:21px;border-color:#dcdcdc"></div>
<div class="rl " style="left:353.3px;top:57.5px;text-align:left"><span class="fit" style="letter-spacing:0.033px;margin-right:-0.033px">Snowdon Towers Sample...</span></div>
<div class="rl " style="left:353.3px;top:81.5px;text-align:left"><span class="fit" style="letter-spacing:-0.83px;margin-right:0.83px">L2</span></div>
<div class="arr" style="left:515.5px;top:63px;border-top-color:#333"></div>
<div class="arr" style="left:515.5px;top:87px;border-top-color:#333"></div>
<div class="arr" style="left:841px;top:87px;border-top-color:#aaa"></div>
<div class="arr" style="left:131.5px;top:110.5px;border-top-color:#333"></div>
<div class="arr" style="left:226px;top:104px;border-top-color:#333"></div>
<div class="arr" style="left:296.5px;top:110.5px;border-top-color:#333"></div>
<div class="arr" style="left:938.8px;top:104px;border-top-color:#333"></div>
<div class="arr" style="left:1100.5px;top:110.5px;border-top-color:#333"></div>
<div class="arr" style="left:1261.5px;top:75px;border-top-color:#333"></div>
<div class="arr" style="left:1298px;top:110.5px;border-top-color:#333"></div>
</div>
<svg class="abs" style="left:0;top:48px" width="1330" height="80" viewBox="0 48 1330 80">
<defs>
<linearGradient id="gbtn" x1="0" y1="0" x2="0" y2="1"><stop offset="0" stop-color="#fdfdfd"/><stop offset="1" stop-color="#d4d4d4"/></linearGradient>
<radialGradient id="ghelp" cx="0.5" cy="0.3" r="0.8"><stop offset="0" stop-color="#5f86e6"/><stop offset="0.6" stop-color="#1f3fb0"/><stop offset="1" stop-color="#142a80"/></radialGradient>
</defs>
<!-- nav bar icon -->
<rect x="33" y="57" width="14" height="27.500" rx="2" fill="url(#gbtn)" stroke="#555" stroke-width="1"/><rect x="33.500" y="57.500" width="13" height="3.500" fill="#555"/><rect x="37.500" y="65" width="5" height="5" fill="#eee" stroke="#444"/><rect x="37.500" y="74.500" width="5" height="5" fill="#eee" stroke="#444"/>
<!-- view cube -->
<path d="M80,63 l13,-6.500 l15,5 v16 l-13,8 l-15,-6.500z" fill="#f4f4f4" stroke="#6a6a6a" stroke-width="1"/><path d="M80,63 l15,6 l13,-7.500 M95,69 v16.500" fill="none" stroke="#8a8a8a" stroke-width="1"/><path d="M80,63 l13,-6.500 l15,5 l-13,7.500z" fill="#fff"/><path d="M80,63 l13,-6.500 l15,5 l-13,7.500z" fill="none" stroke="#8a8a8a" stroke-width="0.800"/><path d="M84,72 l6,2.500 M99,75.500 l5,-3" stroke="#999" stroke-width="1"/>
<!-- HUD -->
<rect x="119.500" y="57.500" width="29" height="27" fill="#fafafa" stroke="#555"/><rect x="120" y="58" width="28" height="3" fill="#555"/><path d="M125.500,80.500 V66" stroke="#1a3fd0" stroke-width="1.400"/><path d="M123,68.500 l2.500,-4 l2.500,4z" fill="#1a3fd0"/><path d="M125.500,80.500 H141" stroke="#d02020" stroke-width="1.400"/><path d="M139.500,78 l4,2.500 l-4,2.500z" fill="#d02020"/><path d="M125.500,80.500 L138,67" stroke="#20a020" stroke-width="1.400"/><path d="M135,66.500 l5,-1.500 l-1.500,5z" fill="#20a020"/>
<!-- reference views -->
<rect x="179.500" y="55.500" width="29" height="29" fill="#c8c8c8" stroke="#555"/><rect x="182" y="58" width="24" height="24" fill="#f6c9a8"/><path d="M182,70 l9,-4 l6,5 l9,-3 v14 h-24z" fill="#c9e2b8"/><path d="M197,58 l-3,8 l5,6 l-2,10 M182,66 l12,0 M199,72 l7,-6" stroke="#c83030" stroke-width="1.300" fill="none"/><path d="M188,58 l4,8 M191,72 l-6,10" stroke="#eee" stroke-width="1"/>
<!-- show grid -->
<g stroke="#444" stroke-width="1.200" fill="none"><path d="M251.500,62 V86 M262.500,62 V86 M246,69.500 H272 M246,79.500 H272"/><circle cx="251.500" cy="58.800" r="3" fill="#fff"/><circle cx="262.500" cy="58.800" r="3" fill="#fff"/><circle cx="243" cy="69.500" r="3" fill="#fff"/><circle cx="243" cy="79.500" r="3" fill="#fff"/></g>
<path d="M254,78 l4.500,5.500 l11,-11 l-2,-2 l-9,8 l-2.500,-3z" fill="#2da82d" stroke="#1a7a1a" stroke-width="0.600"/>
<!-- mode -->
<path d="M286,80 l8,-9 h20 l-6,14 h-22z" fill="#eee" stroke="#666"/><path d="M290,75.500 h22 M288,80 h22 M297,71 l-5,14 M304,71 l-4,14 M310,71 l-3,14" stroke="#888" stroke-width="0.800" fill="none"/><path d="M295.500,67 v-3.500 a4.500,4.500 0 0 1 9,0 v3.500" fill="none" stroke="#777" stroke-width="2"/><rect x="292.500" y="66.500" width="15" height="11.500" rx="1" fill="#e8c27a" stroke="#8a6a2a"/><path d="M300,70 v5 M298.500,71.500 l1.500,-1.500 l1.500,1.500" stroke="#333" stroke-width="1.200" fill="none"/>
<!-- small icons by combos -->
<path d="M328.500,57.500 h6 l3,3 v9 h-9z" fill="#fff" stroke="#555"/><path d="M332,65 h6" stroke="#1a5fd0" stroke-width="2"/><path d="M337,61.500 l4.500,3.500 l-4.500,3.500z" fill="#1a5fd0"/>
<circle cx="334" cy="87.500" r="6.300" fill="#fff" stroke="#444" stroke-width="1.200"/><path d="M334,81 v13 M327.500,87.500 h13" stroke="#444" stroke-width="1"/><path d="M334,87.500 v-6.300 a6.300,6.300 0 0 0 -6.300,6.300z" fill="#444"/><rect x="335" y="88" width="6" height="6.500" fill="#5b8be0" stroke="#1e3f90" stroke-width="0.800"/>
<!-- sectioning icons -->
<path d="M394,109 l5,-3.500 h9 l-4,3.500z" fill="#9cc4f4" stroke="#2a5fb0" stroke-width="0.800"/><path d="M399,109 v9 M396,112 l7,-3" stroke="#2a5fb0" stroke-width="1.300"/><path d="M397,113 l2,5 l2,-5" fill="#2a5fb0"/>
<path d="M460,115 l4,-4 h10 l-4,4z" fill="#ddd" stroke="#555" stroke-width="0.800"/><path d="M466,106 v9" stroke="#2a5fb0" stroke-width="1.400"/><path d="M463.500,110 l2.500,4 l2.500,-4z" fill="#2a5fb0"/><path d="M462,118 l3,-3 h7" stroke="#777" fill="none" stroke-width="0.800"/>
<!-- disabled icons -->
<g stroke="#c4c4c4" fill="none" stroke-width="1.300"><path d="M553,65 h13 a6,6 0 0 1 0,12 h-10"/><circle cx="553" cy="65" r="2" fill="#fff"/><circle cx="553" cy="77" r="3.200" fill="#e4e4e4"/><rect x="561.500" y="63" width="4" height="4" fill="#fff"/><rect x="561.500" y="75" width="4" height="4" fill="#fff"/><circle cx="574.500" cy="71" r="2" fill="#fff"/></g>
<circle cx="622.500" cy="71" r="11.500" fill="#d0d0d0"/><circle cx="622.500" cy="71" r="4" fill="#fff"/><path d="M607,81 v4 h4 M634,57 h4 v4" stroke="#c8c8c8" fill="none"/>
<!-- full screen -->
<rect x="863" y="55.500" width="29.500" height="29" fill="#f2f2f2" stroke="#555"/><rect x="863.500" y="56" width="28.500" height="3" fill="#555"/><path d="M870.500,64.500 l14,13 M884.500,64.500 l-14,13" stroke="#333" stroke-width="1.600"/><path d="M869,63 h5 l-5,5z M886,63 v5 l-5,-5z M869,79 v-5 l5,5z M886,79 h-5 l5,-5z" fill="#333"/>
<!-- split view -->
<rect x="908" y="55.500" width="28.500" height="29" fill="#f6f6f6" stroke="#555"/><rect x="908.500" y="56" width="27.500" height="3" fill="#555"/><path d="M908,70.500 h28.500" stroke="#555"/><path d="M911,68 l4,-5 h18 v5z M911,82 l4,-5 h18 v5z" fill="#e2e2e2" stroke="#666" stroke-width="0.900"/>
<!-- background / window size / title bars icons -->
<rect x="950.500" y="57.500" width="12" height="11" fill="#f4f4f4" stroke="#555"/><rect x="951" y="58" width="11" height="2.500" fill="#555"/><rect x="957.500" y="62.500" width="8" height="9" fill="#dce8f8" stroke="#444"/><path d="M959.500,65 h4 M959.500,67 h4 M959.500,69 h4" stroke="#3a6fc0" stroke-width="0.800"/>
<rect x="950.500" y="80.500" width="15" height="14.500" fill="#fafafa" stroke="#444"/><rect x="951" y="81" width="14" height="2.500" fill="#444"/><path d="M954,92.500 l8,-7 M959,85.500 h3 v3 M954,89.500 v3 h3" stroke="#333" stroke-width="1.100" fill="none"/>
<rect x="950.500" y="108.500" width="10" height="10" fill="#f4f4f4" stroke="#333"/><rect x="951" y="109" width="9" height="2.500" fill="#333"/><path d="M955,106.500 h10 v9 h-4" fill="none" stroke="#333" stroke-width="1.200"/><path d="M951,104 h4 M953.500,102.500 l1.800,1.500 l-1.800,1.500 M951.500,102.500 l-1.800,1.500 l1.800,1.500" stroke="#333" stroke-width="0.900" fill="none"/>
<!-- windows -->
<rect x="1089" y="55.500" width="22" height="17" fill="#f4f4f4" stroke="#555"/><rect x="1089.500" y="56" width="21" height="3" fill="#555"/><rect x="1096.500" y="67.500" width="23" height="17" fill="url(#gbtn)" stroke="#555"/><rect x="1097" y="68" width="22" height="3" fill="#555"/>
<!-- load/save workspace -->
<g id="lw"><rect x="1144.500" y="69.500" width="12" height="10.500" fill="#f4f4f4" stroke="#333" stroke-width="1.200"/><rect x="1148.500" y="73.500" width="7" height="6" fill="#fff" stroke="#333" stroke-width="1"/><path d="M1143.500,72.500 v10 h4" fill="none" stroke="#333" stroke-width="1.100"/><path d="M1150,81.500 h6" stroke="#1a5fd0" stroke-width="2"/><path d="M1155,78 l4.500,3.500 l-4.500,3.500z" fill="#1a5fd0"/></g>
<g id="sw"><rect x="1144.500" y="99.500" width="12" height="10.500" fill="#f4f4f4" stroke="#333" stroke-width="1.200"/><rect x="1148.500" y="103.500" width="7" height="6" fill="#fff" stroke="#333" stroke-width="1"/><path d="M1143.500,102.500 v10 h4" fill="none" stroke="#333" stroke-width="1.100"/><rect x="1152.500" y="107" width="6.500" height="7" fill="#666" stroke="#222" stroke-width="0.800"/><rect x="1154" y="107.500" width="3.500" height="2.500" fill="#eee"/></g>
<!-- help -->
<circle cx="1301" cy="71" r="15.500" fill="url(#ghelp)" stroke="#707070" stroke-width="1.500"/><ellipse cx="1301" cy="63" rx="11" ry="6.500" fill="#fff" fill-opacity="0.220"/>
<text x="1301" y="79" font-size="22" font-weight="bold" fill="#fff" text-anchor="middle" font-family="'Liberation Sans',sans-serif">?</text>
<path d="M517,133.500 h5 v5 M522,138.500 l-5.500,-5.500" stroke="#555" fill="none" stroke-width="1" transform="translate(0,-1)"/>
</svg>

<!-- side tabs -->
<div class="vtab" style="left:-1px;top:151px;width:23px;height:95px"></div>
<div class="abs" style="left:0;top:151px;width:22px;height:94px"><div style="position:absolute;left:11px;top:6px;transform-origin:0 0;transform:rotate(90deg) translate(0,-50%);white-space:nowrap;font-size:12.5px;color:#111;line-height:14px"><span class="fit" style="letter-spacing:0.148px;margin-right:-0.148px">Selection Tree</span></div></div>
<div class="vtab" style="left:1898px;top:151px;width:23px;height:72.500px;background:linear-gradient(90deg,#a6a6a6,#e4e4e4)"></div>
<div class="abs" style="left:1898px;top:151px;width:22px;height:72px"><div style="position:absolute;left:12px;top:6px;transform-origin:0 0;transform:rotate(90deg) translate(0,-50%);white-space:nowrap;font-size:12.5px;color:#111;line-height:14px"><span class="fit" style="letter-spacing:0.302px;margin-right:-0.302px">Properties</span></div></div>
<!-- HUD boxes -->
<div class="hud" style="left:55.500px;top:904.500px;width:199.500px;height:29.500px"><span class="fit" style="letter-spacing:0.059px;margin-right:-0.059px;position:absolute;left:7.500px;top:8.700px">B(2)-Block 39 Left(-11) : L2 (54)</span></div>
<div class="hud" style="left:55.500px;top:943.700px;width:269.500px;height:26.500px"><span class="fit" style="letter-spacing:0.06px;margin-right:-0.06px;position:absolute;left:8px;top:6px;white-space:pre">X: -260.690 in  Y: -149.956 in  Z: 151.622 in</span></div>
<!-- status bar -->
<div class="t" style="left:9.500px;top:1010px;font-size:12px;color:#111"><span class="fit" style="letter-spacing:-0.036px;margin-right:0.036px">AutoSaved: C:\Users\parkerb\AppData\Roaming\Autodesk\Navisworks Manage 2025\AutoSave\Untitled.Autosave19.nwf</span></div>
<svg class="abs" style="left:1620px;top:1000px" width="300" height="32" viewBox="1620 1000 300 32">
<defs><radialGradient id="gerr" cx="0.4" cy="0.3" r="0.8"><stop offset="0" stop-color="#f06060"/><stop offset="1" stop-color="#a01010"/></radialGradient><radialGradient id="ginf" cx="0.4" cy="0.3" r="0.8"><stop offset="0" stop-color="#6a9af0"/><stop offset="1" stop-color="#1030a0"/></radialGradient></defs>
<circle cx="1636.300" cy="1016.300" r="7" fill="url(#gerr)" stroke="#7a1010" stroke-width="0.600"/><path d="M1633.300,1013.300 l6,6 M1639.300,1013.300 l-6,6" stroke="#fff" stroke-width="1.800"/>
<path d="M1667,1009 l7,13.500 h-14z" fill="#f0c020" stroke="#a07a10" stroke-width="0.700"/><path d="M1667,1013 v5.500 M1667,1020 v1.500" stroke="#111" stroke-width="1.600"/>
<circle cx="1697.500" cy="1016.300" r="7" fill="url(#ginf)" stroke="#10207a" stroke-width="0.600"/><path d="M1697.500,1015 v6" stroke="#fff" stroke-width="2"/><circle cx="1697.500" cy="1012" r="1.200" fill="#fff"/>
<g font-family="'Liberation Sans',sans-serif" font-size="12" fill="#111"><text x="1648.500" y="1021">0</text><text x="1678.500" y="1021">0</text><text x="1709.500" y="1021">0</text><text x="1867" y="1021" textLength="45.500" lengthAdjust="spacingAndGlyphs">1185 MB</text></g>
<line x1="1725.500" y1="1005" x2="1725.500" y2="1029" stroke="#707070"/><line x1="1754.500" y1="1005" x2="1754.500" y2="1029" stroke="#707070"/>
<rect x="1732.500" y="1009.500" width="15" height="14" fill="#f4f4f4" stroke="#333"/><rect x="1733" y="1010" width="14" height="2.500" fill="#555"/><path d="M1737,1015.500 h8 M1737,1018 h8 M1737,1020.500 h8" stroke="#4a6aa0"/><path d="M1734.500,1015.500 h1.500 M1734.500,1018 h1.500 M1734.500,1020.500 h1.500" stroke="#333"/>
<rect x="1760" y="1017" width="30" height="7" fill="#0000f0"/>
<rect x="1794" y="1017" width="30" height="7" fill="#e4e4e4" stroke="#555" stroke-width="0.600"/><rect x="1794" y="1017" width="20" height="7" fill="#0000f0"/>
<rect x="1828.500" y="1017.500" width="29" height="6" fill="#e4e4e4" stroke="#444" stroke-width="1"/>
<path d="M1768,1008.500 h8 l3,2 l-3,2 h-8z" fill="#e03030" stroke="#222" stroke-width="0.800"/><path d="M1776,1008.500 l3,2 l-3,2z" fill="#f0e040" stroke="#222" stroke-width="0.600"/>
<path d="M1805.500,1010 v5 a3.500,1.500 0 0 0 7,0 v-5" fill="#eee" stroke="#222" stroke-width="0.900"/><ellipse cx="1809" cy="1010" rx="3.500" ry="1.600" fill="#fff" stroke="#222" stroke-width="0.900"/>
<path d="M1836,1008.500 h14 M1843,1008.500 v6 M1843,1010.500 l-5,4 M1843,1010.500 l5,4" stroke="#222" stroke-width="0.900" fill="none"/><g fill="#fff" stroke="#222" stroke-width="0.700"><rect x="1841.500" y="1007" width="3" height="3"/><rect x="1836" y="1013.500" width="2.500" height="2.500"/><rect x="1847.500" y="1013.500" width="2.500" height="2.500"/><rect x="1835" y="1007" width="2.500" height="2.500"/><rect x="1848.500" y="1007" width="2.500" height="2.500"/></g>
</svg>
<!--CHROME-->
</body>
</html>
